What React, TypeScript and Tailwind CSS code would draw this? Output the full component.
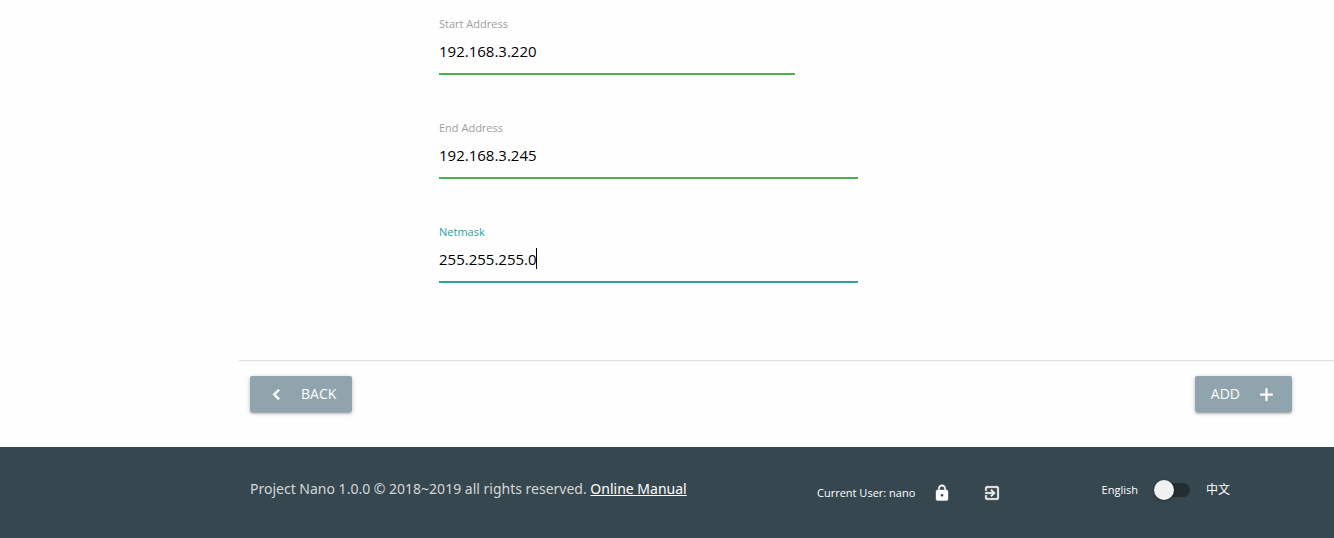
import { useState } from "react";

type FieldProps = {
  id: string;
  label: string;
  initial: string;
  width: string;
  active?: boolean;
};

function Field({ id, label, initial, width, active = false }: FieldProps) {
  const [value, setValue] = useState(initial);
  return (
    <div className={`relative flex w-full flex-col ${width}`}>
      <label
        htmlFor={id}
        className={`text-[11px] leading-4 ${active ? "text-[#26a69a]" : "text-[#9e9e9e]"}`}
      >
        {label}
      </label>
      <input
        id={id}
        type="text"
        value={value}
        onChange={(e) => setValue(e.target.value)}
        className={`h-[43px] w-full border-b-2 bg-transparent pb-1 text-[15px] text-black outline-none ${
          active ? "border-[#26a69a] caret-transparent" : "border-[#4caf50]"
        }`}
      />
      {active && <span className="absolute left-[97px] top-6 h-[21px] w-px bg-black" />}
    </div>
  );
}

const paths = {
  back: "M15.41 7.41 14 6l-6 6 6 6 1.41-1.41L10.83 12z",
  add: "M19 13h-6v6h-2v-6H5v-2h6V5h2v6h6v2z",
  lock: "M18 8h-1V6c0-2.76-2.24-5-5-5S7 3.24 7 6v2H6c-1.1 0-2 .9-2 2v10c0 1.1.9 2 2 2h12c1.1 0 2-.9 2-2V10c0-1.1-.9-2-2-2zm-6 9c-1.1 0-2-.9-2-2s.9-2 2-2 2 .9 2 2-.9 2-2 2zm3.1-9H8.9V6c0-1.71 1.39-3.1 3.1-3.1 1.71 0 3.1 1.39 3.1 3.1v2z",
  exit: "M10.09 15.59 11.5 17l5-5-5-5-1.41 1.41L12.67 11H3v2h9.67l-2.58 2.59zM19 3H5c-1.11 0-2 .9-2 2v4h2V5h14v14H5v-4H3v4c0 1.1.89 2 2 2h14c1.1 0 2-.9 2-2V5c0-1.1-.9-2-2-2z",
};

function Icon({ name, size }: { name: keyof typeof paths; size: string }) {
  return (
    <svg
      viewBox="0 0 24 24"
      fill="currentColor"
      stroke="currentColor"
      strokeWidth={name === "back" ? 1 : 0.5}
      aria-hidden="true"
      className={size}
    >
      <path d={paths[name]} />
    </svg>
  );
}

const raised =
  "flex h-9 items-center rounded-xs bg-[#90a4ae] text-sm text-white uppercase shadow-[0_2px_2px_0_rgba(0,0,0,0.14),0_3px_1px_-2px_rgba(0,0,0,0.12),0_1px_5px_0_rgba(0,0,0,0.2)]";

export default function App() {
  const [chinese, setChinese] = useState(false);
  return (
    <div className="flex min-h-screen flex-col bg-[#fefefe] font-['Open_Sans','Noto_Sans_CJK_SC',sans-serif]">
      <main className="ml-[239px]">
        <form className="flex flex-col gap-[45px] pt-4 pb-[77px] pl-[200px]">
          <Field id="start" label="Start Address" initial="192.168.3.220" width="max-w-[356px]" />
          <Field id="end" label="End Address" initial="192.168.3.245" width="max-w-[419px]" />
          <Field id="netmask" label="Netmask" initial="255.255.255.0" width="max-w-[419px]" active />
        </form>
        <div className="flex justify-between border-t border-[#e0e0e0] pt-[15px] pr-[42px] pb-[35px] pl-[11px]">
          <button type="button" className={`${raised} gap-[14px] px-4`}>
            <Icon name="back" size="size-[21px]" />
            Back
          </button>
          <button type="button" className={`${raised} gap-4 pr-[15px] pl-4`}>
            Add
            <Icon name="add" size="size-[21px]" />
          </button>
        </div>
      </main>
      <footer className="flex grow items-start bg-[#37474f] pt-8 pr-[104px] pl-[250px] text-[11px] text-white">
        <p className="w-[567px] shrink-0 font-['Noto_Sans',sans-serif] text-sm leading-5 text-[#d3d7d9]">
          Project Nano 1.0.0 © 2018~2019 all rights reserved.{" "}
          <a href="#manual" className="text-white underline">
            Online Manual
          </a>
        </p>
        <div className="flex items-center pt-[5px]">
          <span>Current User: nano</span>
          <button type="button" aria-label="Lock" className="ml-[18px]">
            <Icon name="lock" size="size-[18px]" />
          </button>
          <button type="button" aria-label="Log out" className="ml-8">
            <Icon name="exit" size="size-[18px]" />
          </button>
        </div>
        <label className="ml-auto flex items-center pt-[3px]">
          <span>English</span>
          <input
            type="checkbox"
            role="switch"
            aria-label="Language"
            checked={chinese}
            onChange={(e) => setChinese(e.target.checked)}
            className="relative mx-4 h-[14px] w-9 appearance-none rounded-full bg-[#232d32] before:absolute before:-top-[3px] before:left-0 before:size-5 before:rounded-full before:bg-[#f1f1f1] before:shadow-[0_1px_3px_rgba(0,0,0,0.4)] before:content-[''] checked:before:left-4"
          />
          <span className="text-xs">中文</span>
        </label>
      </footer>
    </div>
  );
}
